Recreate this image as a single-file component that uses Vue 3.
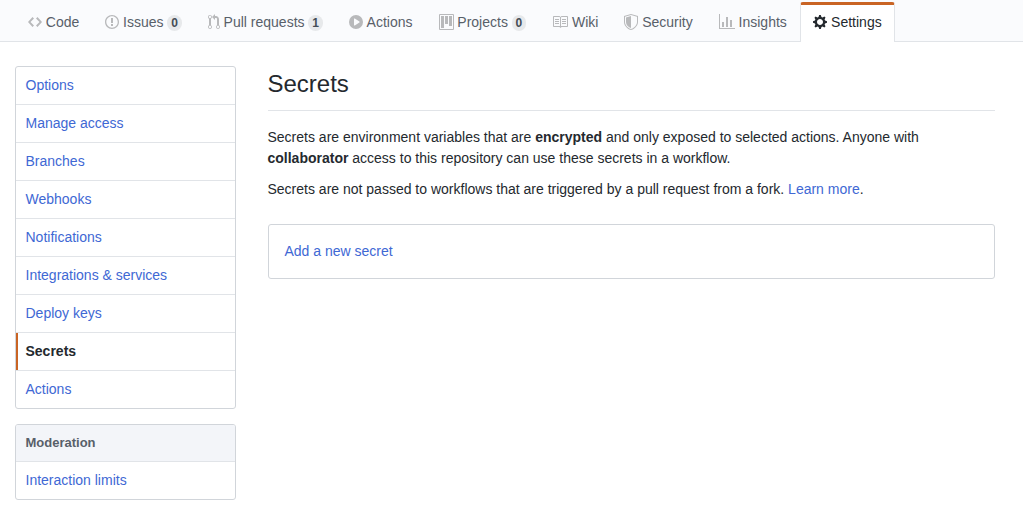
<script setup>
const tabs = [
  { label: 'Code', w: 14, d: 'M9.5 3L8 4.5 11.5 8 8 11.5 9.5 13 14 8 9.5 3zm-5 0L0 8l4.5 5L6 11.5 2.5 8 6 4.5 4.5 3z' },
  { label: 'Issues', w: 14, count: '0', d: 'M7 2.3c3.14 0 5.7 2.56 5.7 5.7s-2.56 5.7-5.7 5.7A5.71 5.71 0 0 1 1.3 8c0-3.14 2.56-5.7 5.7-5.7zM7 1C3.14 1 0 4.14 0 8s3.14 7 7 7 7-3.14 7-7-3.14-7-7-7zm1 3H6v5h2V4zm0 6H6v2h2v-2z' },
  { label: 'Pull requests', w: 12, count: '1', d: 'M11 11.28V5c-.03-.78-.34-1.47-.94-2.06C9.46 2.35 8.78 2.03 8 2H7V0L4 3l3 3V4h1c.27.02.48.11.69.31.21.2.3.42.31.69v6.28A1.993 1.993 0 0 0 10 15a1.993 1.993 0 0 0 1-3.72zm-1 2.92c-.66 0-1.2-.55-1.2-1.2 0-.65.55-1.2 1.2-1.2.65 0 1.2.55 1.2 1.2 0 .65-.55 1.2-1.2 1.2zM4 3c0-1.11-.89-2-2-2a1.993 1.993 0 0 0-1 3.72v6.56A1.993 1.993 0 0 0 2 15a1.993 1.993 0 0 0 1-3.72V4.72c.59-.34 1-.98 1-1.72zm-.8 10c0 .66-.55 1.2-1.2 1.2-.65 0-1.2-.55-1.2-1.2 0-.65.55-1.2 1.2-1.2.65 0 1.2.55 1.2 1.2zM2 4.2C1.34 4.2.8 3.65.8 3c0-.65.55-1.2 1.2-1.2.65 0 1.2.55 1.2 1.2 0 .65-.55 1.2-1.2 1.2z' },
  { label: 'Actions', w: 14, d: 'M14 8A7 7 0 1 1 0 8a7 7 0 0 1 14 0zm-8.223 3.482l4.599-3.066a.5.5 0 0 0 0-.832L5.777 4.518A.5.5 0 0 0 5 4.934v6.132a.5.5 0 0 0 .777.416z' },
  { label: 'Projects', w: 15, count: '0', d: 'M10 12h3V2h-3v10zm-4-2h3V2H6v8zm-4 4h3V2H2v12zm-1 1h13V1H1v14zM14 0H1a1 1 0 0 0-1 1v14a1 1 0 0 0 1 1h13a1 1 0 0 0 1-1V1a1 1 0 0 0-1-1z' },
  { label: 'Wiki', w: 16, d: 'M3 5h4v1H3V5zm0 3h4V7H3v1zm0 2h4V9H3v1zm11-5h-4v1h4V5zm0 2h-4v1h4V7zm0 2h-4v1h4V9zm2-6v9c0 .55-.45 1-1 1H9.5l-1 1-1-1H2c-.55 0-1-.45-1-1V3c0-.55.45-1 1-1h5.5l1 1 1-1H15c.55 0 1 .45 1 1zm-8 .5L7.5 3H2v9h6V3.5zm7-.5H9.5l-.5.5V12h6V3z' },
  { label: 'Security', w: 14, d: 'M0 2l7-2 7 2v6.02C14 12.69 8.69 16 7 16c-1.69 0-7-3.31-7-7.98V2zm1 .75L7 1l6 1.75v5.268C13 12.104 8.449 15 7 15c-1.449 0-6-2.896-6-6.982V2.75zm1 .75L7 2v12c-1.207 0-5-2.482-5-5.985V3.5z' },
  { label: 'Insights', w: 16, d: 'M16 14v1H0V0h1v14h15zM5 13H3V8h2v5zm4 0H7V3h2v10zm4 0h-2V6h2v7z' },
  { label: 'Settings', w: 14, active: true, d: 'M14 8.77v-1.6l-1.94-.64-.45-1.09.88-1.84-1.13-1.13-1.81.91-1.09-.45-.69-1.92h-1.6l-.63 1.94-1.11.45-1.84-.88-1.13 1.13.91 1.81-.45 1.09L0 7.23v1.59l1.94.64.45 1.09-.88 1.84 1.13 1.13 1.81-.91 1.09.45.69 1.92h1.59l.63-1.94 1.11-.45 1.84.88 1.13-1.13-.92-1.81.47-1.09L14 8.75v.02zM7 11c-1.66 0-3-1.34-3-3s1.34-3 3-3 3 1.34 3 3-1.34 3-3 3z' },
]
const menu = ['Options', 'Manage access', 'Branches', 'Webhooks', 'Notifications', 'Integrations & services', 'Deploy keys', 'Secrets', 'Actions']
</script>

<template>
  <div class="page">
    <nav class="tabs">
      <a v-for="t in tabs" :key="t.label" class="tab" :class="{ active: t.active }">
        <svg class="icon" :width="t.w" height="16" :viewBox="`0 0 ${t.w} 16`"><path fill-rule="evenodd" :d="t.d" /></svg>
        <span class="label">{{ t.label }}</span>
        <span v-if="t.count" class="counter">{{ t.count }}</span>
      </a>
    </nav>
    <div class="body">
      <aside class="side">
        <div class="menu">
          <a v-for="m in menu" :key="m" class="item" :class="{ selected: m === 'Secrets' }">{{ m }}</a>
        </div>
        <div class="menu">
          <div class="heading">Moderation</div>
          <a class="item">Interaction limits</a>
        </div>
      </aside>
      <main class="main">
        <h2>Secrets</h2>
        <p>Secrets are environment variables that are <strong>encrypted</strong> and only exposed to selected actions. Anyone with <strong>collaborator</strong> access to this repository can use these secrets in a workflow.</p>
        <p>Secrets are not passed to workflows that are triggered by a pull request from a fork. <a class="link">Learn more</a>.</p>
        <div class="box"><a class="link">Add a new secret</a></div>
      </main>
    </div>
  </div>
</template>

<style>
body { background: #fff; }
</style>

<style scoped>
.page {
  height: 526px;
  overflow: hidden;
  font-family: "Liberation Sans", Arial, sans-serif;
  font-size: 14px;
  line-height: 21px;
  color: #24292e;
}
.page * { box-sizing: border-box; }
.tabs {
  display: flex;
  align-items: flex-end;
  height: 42px;
  padding-left: 15px;
  background: #fafbfd;
  box-shadow: inset 0 -1px #e1e4e8;
}
.tab {
  display: flex;
  align-items: center;
  height: 40px;
  padding: 0 12px 3px;
  border: solid transparent;
  border-width: 3px 1px 0;
  border-radius: 3px 3px 0 0;
  color: #586069;
  white-space: nowrap;
}
.tab.active {
  padding-right: 12.4px;
  background: #fff;
  border-color: #c96424 #e1e4e8 transparent;
  color: #24292e;
}
.icon { flex: none; margin-right: 3.8px; fill: #b8b9bb; }
.active .icon { margin-right: 4.3px; fill: #24292e; }
.counter {
  margin: 2px 0 0 3.8px;
  padding: 2px 3.9px;
  border-radius: 20px;
  background: #e7e9eb;
  color: #444d56;
  font-size: 12px;
  font-weight: 700;
  line-height: 12px;
}
.body { display: flex; gap: 32px; padding: 24px 28px 0 15px; }
.side { width: 221px; flex: none; }
.menu {
  margin-bottom: 15px;
  border: 1px solid #d1d5da;
  border-radius: 3px;
  overflow: hidden;
}
.item {
  display: block;
  height: 38px;
  padding: 8px 9.5px;
  border-bottom: 1px solid #e1e4e8;
  color: #4068d4;
}
.item:last-child { height: 37px; border-bottom: 0; }
.item.selected {
  color: #24292e;
  font-weight: 700;
  box-shadow: inset 2px 0 #c96424;
}
.heading {
  height: 37px;
  padding: 8px 9.5px;
  border-bottom: 1px solid #e1e4e8;
  background: #f3f5f9;
  color: #586069;
  font-size: 13px;
  font-weight: 700;
  line-height: 20px;
}
.main { flex: 1; min-width: 0; margin-left: -0.5px; }
h2 {
  height: 45px;
  margin: 0 0 16px;
  border-bottom: 1px solid #e1e4e8;
  font-size: 24px;
  font-weight: 400;
  line-height: 36px;
}
p { margin: 0 0 10px; }
.link { color: #4068d4; }
.box {
  height: 55px;
  margin-top: 24px;
  padding: 16px;
  border: 1px solid #d1d5da;
  border-radius: 3px;
}
</style>
